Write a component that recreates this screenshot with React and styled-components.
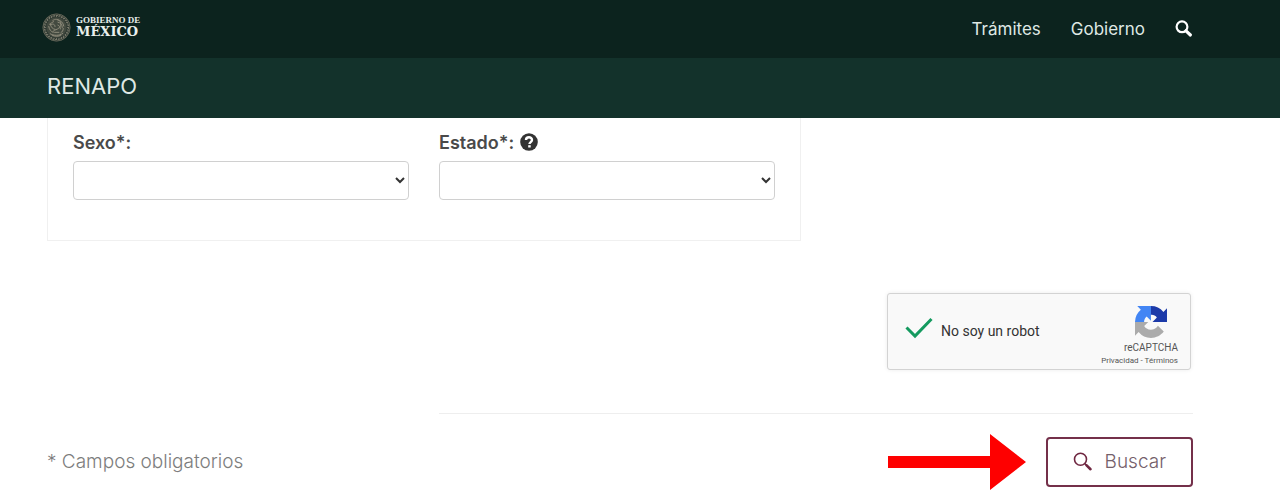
import styled, { createGlobalStyle } from 'styled-components';

const ticks = Array.from({ length: 28 }, (_, i) => i * (360 / 28));

function Seal() {
  return (
    <SealSvg viewBox="0 0 60 60" aria-hidden="true">
      <circle cx="30" cy="30" r="29" fill="#2c3730" />
      <circle cx="30" cy="30" r="28" fill="none" stroke="#5f6356" strokeWidth="2" />
      {ticks.map((deg) => (
        <path
          key={deg}
          d="M30 4v4M32 4v2"
          stroke="#7d7c6e"
          strokeWidth="2"
          transform={`rotate(${deg} 30 30)`}
        />
      ))}
      <circle cx="30" cy="30" r="21" fill="#434a40" />
      <g fill="none" stroke="#8f8c7b" strokeWidth="2" strokeLinecap="round">
        <path d="M22 16c5-5 12-3 15 1c4 5 2 11-2 14c-4 4-9 3-12 7" />
        <path d="M24 18c-3 3-7 2-8 6l6-1c3 0 5 2 5 5" />
        <path d="M32 14c7 1 12 6 13 13M33 19c5 1 9 5 9 11M33 25c3 1 5 4 5 8" />
        <path d="M14 28c1 6 4 10 9 12M17 23c2 7 5 10 10 11" />
        <path d="M17 43c6 4 19 5 26-1M21 46c6 3 13 3 18 0M26 40h9M44 32c0 4-2 7-5 9" />
      </g>
    </SealSvg>
  );
}

// solid glass for the top bar
function NavSearchIcon() {
  return (
    <svg width="18" height="18" viewBox="0 0 18 18" fill="none" stroke="currentColor" aria-hidden="true">
      <circle cx="7" cy="6.800" r="5.400" strokeWidth="2.200" />
      <path d="M11 10.800l4.400 4.200" strokeWidth="3.200" strokeLinecap="round" />
    </svg>
  );
}

// thin glass with a heavier handle for the button
function SearchIcon() {
  return (
    <svg width="20" height="20" viewBox="0 0 20 20" fill="none" stroke="currentColor" aria-hidden="true">
      <circle cx="7.500" cy="7.300" r="6" strokeWidth="1.600" />
      <path d="M11.800 11.600l2 2" strokeWidth="1.600" />
      <path d="M13.600 13.400l3.900 3.800" strokeWidth="2.600" strokeLinecap="round" />
    </svg>
  );
}

function HelpIcon() {
  return (
    <svg width="18" height="18" viewBox="0 0 18 18" aria-hidden="true">
      <circle cx="9" cy="9" r="8.800" fill="#333" />
      <path
        d="M6 7C6 3.400 12 3.400 12 6.900c0 2.100-2.500 2.200-2.500 4.100"
        fill="none"
        stroke="#fff"
        strokeWidth="2.400"
      />
      <rect x="8.200" y="12.200" width="2.500" height="2.300" fill="#fff" />
    </svg>
  );
}

function RecaptchaLogo() {
  return (
    <svg width="32" height="32" viewBox="0 0 64 64" aria-hidden="true">
      <path
        fill="#1c3aa9"
        d="M64 31.95a33 33 0 0 0-.03-1.37V4.61l-7.18 7.18A31.98 31.98 0 0 0 32 .05c-.46 0-.92.01-1.37.03v17.9c5-1.2 10.200 .8 13.100 5.200l-8.700 8.700z"
      />
      <path
        fill="#4285f4"
        d="M31.860 .050a33 33 0 0 0-1.370 .030H4.520l7.180 7.180A31.980 31.980 0 0 0 0 32.050h18.200c0-5.200 2.300-8.700 5.100-11.300l8.560 8.600z"
      />
      <path
        fill="#ababab"
        d="M0 32.050c0 .460 .010 .920 .030 1.370v25.970l7.180-7.180A31.980 31.980 0 0 0 32 63.950c10.430 0 19.690-4.990 25.530-12.710L45.760 39.350a15.600 15.600 0 0 1-4.770 5.350c-2.060 1.600-4.970 2.920-8.990 2.920c-6.500 0-11.600-3.500-13.600-7.400l8.200-8.170z"
      />
    </svg>
  );
}

export default function App() {
  return (
    <>
      <GlobalStyle />
      <TopBar>
        <Brand href="#">
          <Seal />
          <BrandText>
            <BrandSmall>GOBIERNO DE</BrandSmall>
            <BrandLarge>MÉXICO</BrandLarge>
          </BrandText>
        </Brand>
        <Nav>
          <NavLink href="#">Trámites</NavLink>
          <NavLink href="#">Gobierno</NavLink>
          <NavLink href="#" aria-label="Buscar en el sitio">
            <NavSearchIcon />
          </NavLink>
        </Nav>
      </TopBar>
      <SubBar>
        <SubLink href="#">RENAPO</SubLink>
      </SubBar>

      <Main>
        <Panel>
          <Field>
            <Label htmlFor="sexo">Sexo*:</Label>
            <Select id="sexo" />
          </Field>
          <Field>
            <Label htmlFor="estado">
              Estado*: <HelpIcon />
            </Label>
            <Select id="estado" />
          </Field>
        </Panel>

        <CaptchaRow>
          <Captcha>
            <Check>
              <CheckInput id="robot" type="checkbox" defaultChecked />
              <svg width="28" height="22" viewBox="0 0 28 22" aria-hidden="true">
                <path d="M1.500 10.500l8.500 8.500L26.500 2" fill="none" stroke="#149a5f" strokeWidth="3" />
              </svg>
            </Check>
            <CaptchaText htmlFor="robot">No soy un robot</CaptchaText>
            <CaptchaBrand>
              <RecaptchaLogo />
              <CaptchaName>reCAPTCHA</CaptchaName>
              <CaptchaLinks>
                <a href="#">Privacidad</a> - <a href="#">Términos</a>
              </CaptchaLinks>
            </CaptchaBrand>
          </Captcha>
        </CaptchaRow>

        <Divider />

        <Actions>
          <Note>* Campos obligatorios</Note>
          <svg width="138" height="56" viewBox="0 0 138 56" aria-hidden="true">
            <path d="M0 22h102V0l36 28l-36 28V34H0z" fill="#fe0000" />
          </svg>
          <SearchButton type="button">
            <SearchIcon />
            <ButtonText>Buscar</ButtonText>
          </SearchButton>
        </Actions>
      </Main>
    </>
  );
}

const GlobalStyle = createGlobalStyle`
  * {
    box-sizing: border-box;
  }
  body {
    margin: 0;
    background: #fff;
    font-family: Inter, sans-serif;
    color: #4a4a4a;
  }
  a {
    color: inherit;
    text-decoration: none;
  }
`;
const TopBar = styled.header`
  display: flex;
  align-items: center;
  justify-content: space-between;
  height: 58px;
  padding: 0 87px 4px 42px;
  background: #0c231e;
`;
const Brand = styled.a`
  display: flex;
  align-items: center;
  gap: 5px;
`;
const SealSvg = styled.svg`
  width: 29px;
  height: 29px;
`;
const BrandText = styled.span`
  display: flex;
  flex-direction: column;
  color: #e9efec;
  font-weight: bold;
`;
const BrandSmall = styled.span`
  font-family: 'Liberation Serif', serif;
  font-size: 9px;
  line-height: 9px;
`;
const BrandLarge = styled.span`
  font-family: 'DejaVu Serif', serif;
  font-size: 13px;
  line-height: 14px;
`;
const Nav = styled.nav`
  display: flex;
  align-items: center;
  gap: 30px;
`;
const NavLink = styled.a`
  display: flex;
  padding-top: 4px;
  color: #dfe8e4;
  font-size: 17px;
  line-height: 22px;

  svg {
    color: #fff;
  }
`;
const SubBar = styled.div`
  display: flex;
  align-items: center;
  height: 60px;
  padding: 0 47px 4px;
  background: #13322b;
`;
const SubLink = styled.a`
  color: #dfe8e4;
  font-size: 22px;
  line-height: 24px;
`;
const Main = styled.main`
  display: grid;
  grid-template-columns: repeat(3, 1fr);
  column-gap: 30px;
  padding: 0 87px 0 47px;
`;
const Panel = styled.form`
  grid-column: span 2;
  display: grid;
  grid-template-columns: 1fr 1fr;
  gap: 30px;
  padding: 12px 25px 40px;
  border: 1px solid #f0f0f0;
  border-top: 0;
`;
const Field = styled.div`
  display: flex;
  flex-direction: column;
  gap: 7px;
`;
const Label = styled.label`
  display: flex;
  align-items: center;
  gap: 6px;
  height: 24px;
  font-size: 18px;
  font-weight: 600;
`;
const Select = styled.select`
  width: 100%;
  height: 39px;
  border: 1px solid #d0d0d0;
  border-radius: 4px;
  background: #fff;
  color: #333;
  font-family: inherit;
  font-size: 18px;
`;
const CaptchaRow = styled.div`
  grid-column: 1 / -1;
  display: flex;
  justify-content: flex-end;
  padding: 52px 2px 43px 0;
`;
const Captcha = styled.div`
  display: flex;
  align-items: center;
  width: 304px;
  height: 77px;
  padding: 0 12px 0 17px;
  border: 1px solid #d3d3d3;
  border-radius: 3px;
  background: #f9f9f9;
  box-shadow: 0 0 4px rgba(0, 0, 0, 0.08);
  font-family: Roboto, sans-serif;
`;
const Check = styled.span`
  position: relative;
  display: flex;
  padding-bottom: 8px;
`;
const CheckInput = styled.input`
  position: absolute;
  inset: 0;
  width: 100%;
  height: 100%;
  margin: 0;
  opacity: 0;
  cursor: pointer;
`;
const CaptchaText = styled.label`
  flex: 1;
  padding: 0 0 2px 8px;
  color: #333;
  font-size: 14px;
  line-height: 18px;
`;
const CaptchaBrand = styled.div`
  display: flex;
  flex-direction: column;
  align-items: flex-end;
  padding-top: 8px;
  color: #555;

  svg {
    margin-right: 11px;
  }
`;
const CaptchaName = styled.span`
  margin-top: 3px;
  font-size: 10px;
  line-height: 14px;
`;
const CaptchaLinks = styled.span`
  font-size: 8px;
  line-height: 11px;
`;
const Divider = styled.hr`
  grid-column: 2 / -1;
  width: 100%;
  margin: 0;
  border: 0;
  border-top: 1px solid #eee;
`;
const Actions = styled.div`
  grid-column: 1 / -1;
  display: flex;
  align-items: center;
  gap: 20px;
  padding: 20px 0 12px;
`;
const Note = styled.p`
  flex: 1;
  margin: 0;
  color: #7d7d7d;
  font-size: 19px;
  font-weight: 300;
  line-height: 24px;
`;
const SearchButton = styled.button`
  display: flex;
  align-items: center;
  gap: 12px;
  height: 50px;
  padding: 0 25px;
  border: 2px solid #74304a;
  border-radius: 4px;
  background: #fff;
  color: #6f2741;
  font-family: inherit;
  cursor: pointer;
`;
const ButtonText = styled.span`
  color: #74606a;
  font-size: 19px;
  font-weight: 300;
  line-height: 24px;
`;
